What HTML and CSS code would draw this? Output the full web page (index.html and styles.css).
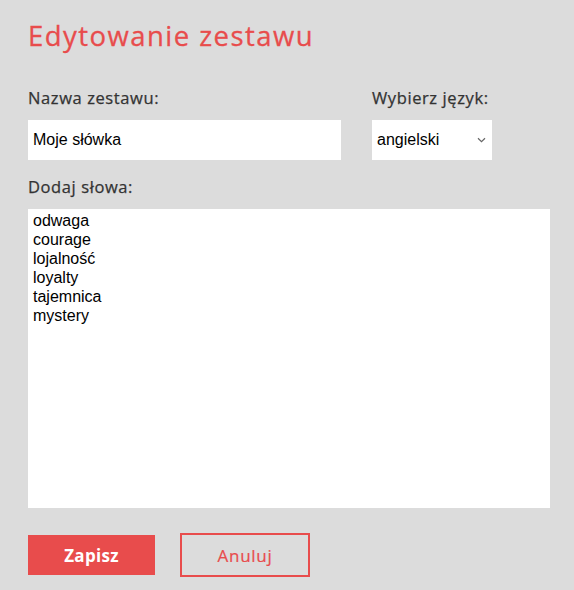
FILE: index.html
```html
<!DOCTYPE html>
<html lang="pl">
<head>
<meta charset="utf-8">
<link rel="stylesheet" href="styles.css">
</head>
<body>
<main class="editor">
  <h1 class="title">Edytowanie zestawu</h1>
  <div class="row">
    <div class="field field-name">
      <label class="label" for="name">Nazwa zestawu:</label>
      <input id="name" class="input" type="text" value="Moje słówka">
    </div>
    <div class="field field-lang">
      <label class="label" for="lang">Wybierz język:</label>
      <div class="select">
        <span class="select-value">angielski</span>
        <svg class="chevron" width="9" height="6" viewBox="0 0 9 6"><path d="M1 1.2 L4.5 4.6 L8 1.2" fill="none" stroke="#666" stroke-width="1.2"/></svg>
      </div>
    </div>
  </div>
  <div class="field field-words">
    <label class="label" for="words">Dodaj słowa:</label>
    <textarea id="words" class="textarea">odwaga
courage
lojalność
loyalty
tajemnica
mystery</textarea>
  </div>
  <div class="actions">
    <button class="btn btn-primary">Zapisz</button>
    <button class="btn btn-outline">Anuluj</button>
  </div>
</main>
</body>
</html>
```

FILE: styles.css
```css
* { box-sizing: border-box; }
html, body { margin: 0; padding: 0; }
body {
  background: #dcdcdc;
  font-family: "Open Sans", "Liberation Sans", sans-serif;
  width: 574px;
  height: 590px;
  overflow: hidden;
}
.editor {
  padding: 17px 24px 0 28px;
}
.title {
  margin: 0;
  font-size: 27.5px;
  font-weight: 400;
  color: #e84c4c;
  letter-spacing: 1.45px;
  line-height: 38px;
  -webkit-text-stroke: 0.3px #e84c4c;
}
.row {
  display: flex;
  gap: 31px;
  margin-top: 32px;
}
.field {
  display: flex;
  flex-direction: column;
}
.label {
  font-size: 16.5px;
  font-weight: 400;
  color: #333;
  line-height: 22px;
  letter-spacing: 0.6px;
  margin-bottom: 11px;
  -webkit-text-stroke: 0.25px #333;
}
.input {
  width: 313px;
  height: 40px;
  border: none;
  outline: none;
  background: #fff;
  padding: 0 5px;
  font-family: "Liberation Sans", Arial, sans-serif;
  font-size: 16px;
  color: #000;
}
.select {
  width: 120px;
  height: 40px;
  background: #fff;
  display: flex;
  align-items: center;
  justify-content: space-between;
  padding: 0 6px 0 5px;
  font-family: "Liberation Sans", Arial, sans-serif;
  font-size: 16px;
  color: #000;
}
.field-words { margin-top: 16px; }
.textarea {
  width: 522px;
  height: 299px;
  border: none;
  outline: none;
  resize: none;
  background: #fff;
  padding: 2px 5px;
  font-family: "Liberation Sans", Arial, sans-serif;
  font-size: 16px;
  line-height: 19px;
  color: #000;
}
.actions {
  display: flex;
  align-items: center;
  gap: 25px;
  margin-top: 25px;
}
.btn {
  font-family: "Open Sans", "Liberation Sans", sans-serif;
  font-size: 17px;
  cursor: pointer;
}
.btn-primary {
  width: 127px;
  height: 40px;
  border: none;
  background: #e84c4c;
  color: #fff;
  font-weight: 700;
  letter-spacing: 0.3px;
}
.btn-outline {
  width: 130px;
  height: 44px;
  border: 2px solid #e84c4c;
  background: transparent;
  color: #e84c4c;
  font-weight: 400;
  letter-spacing: 0.7px;
  -webkit-text-stroke: 0.2px #e84c4c;
}
```
